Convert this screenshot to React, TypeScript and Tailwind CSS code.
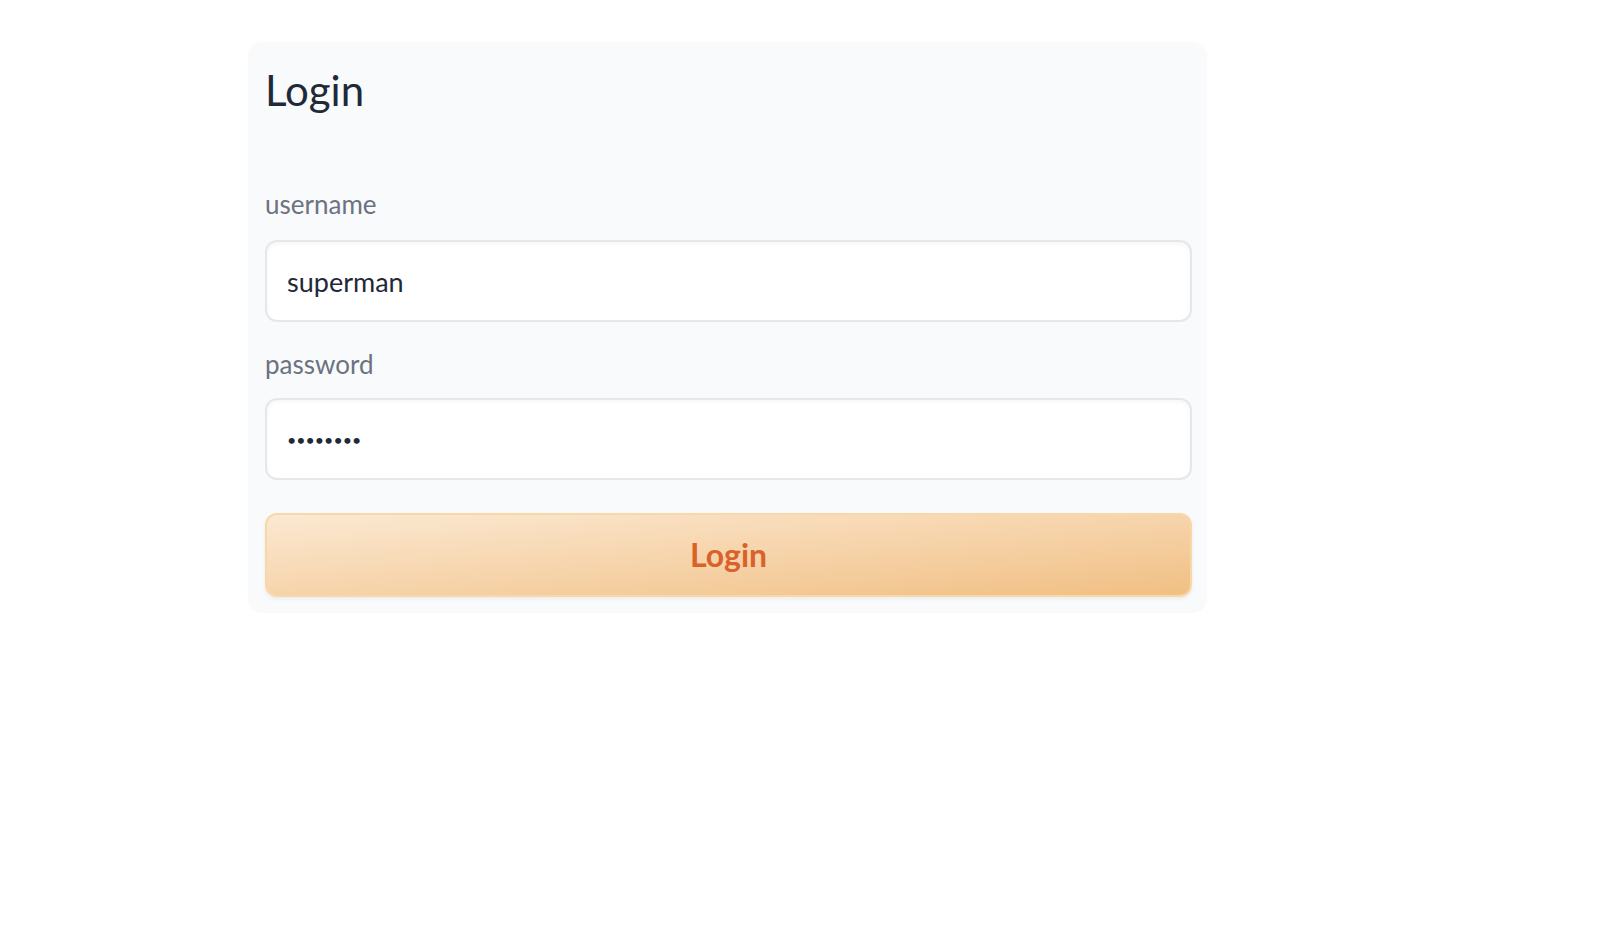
import React from 'react'

const font = { fontFamily: 'Lato, "Noto Sans", sans-serif' }

export default function App() {
  return (
    <div className="min-h-screen bg-white" style={font}>
      <div className="ml-[248px] pt-[42px]">
        <div className="w-[959px] rounded-[14px] bg-[#f9fafb] px-[17px] pt-[18px] pb-[16px]">
          <h2 className="text-[42px] leading-[60px] text-[#1f2937]">Login</h2>

          <div className="mt-[68px] flex flex-col">
            <label className="text-[26px] leading-[32px] text-[#6b7280]">username</label>
            <input
              type="text"
              defaultValue="superman"
              className="mt-[20px] h-[82px] w-[927px] rounded-[12px] border-2 border-[#e5e7eb] bg-white px-[20px] text-[27px] text-[#1f2937] shadow-[inset_0_2px_4px_rgba(0,0,0,0.04)] outline-none"
            />

            <label className="mt-[26px] text-[26px] leading-[32px] text-[#6b7280]">password</label>
            <input
              type="password"
              defaultValue="superman"
              className="mt-[18px] h-[82px] w-[927px] rounded-[12px] border-2 border-[#e5e7eb] bg-white px-[20px] text-[16px] text-[#1f2937] shadow-[inset_0_2px_4px_rgba(0,0,0,0.04)] outline-none"
            />

            <button
              type="button"
              className="mt-[33px] h-[84px] w-[927px] rounded-[12px] border-2 border-[#f8d8a8] bg-gradient-to-br from-[#fbe9d2] to-[#f1bf83] text-[32px] font-bold text-[#d9622b] shadow-[0_2px_4px_rgba(0,0,0,0.06)]"
            >
              Login
            </button>
          </div>
        </div>
      </div>
    </div>
  )
}
